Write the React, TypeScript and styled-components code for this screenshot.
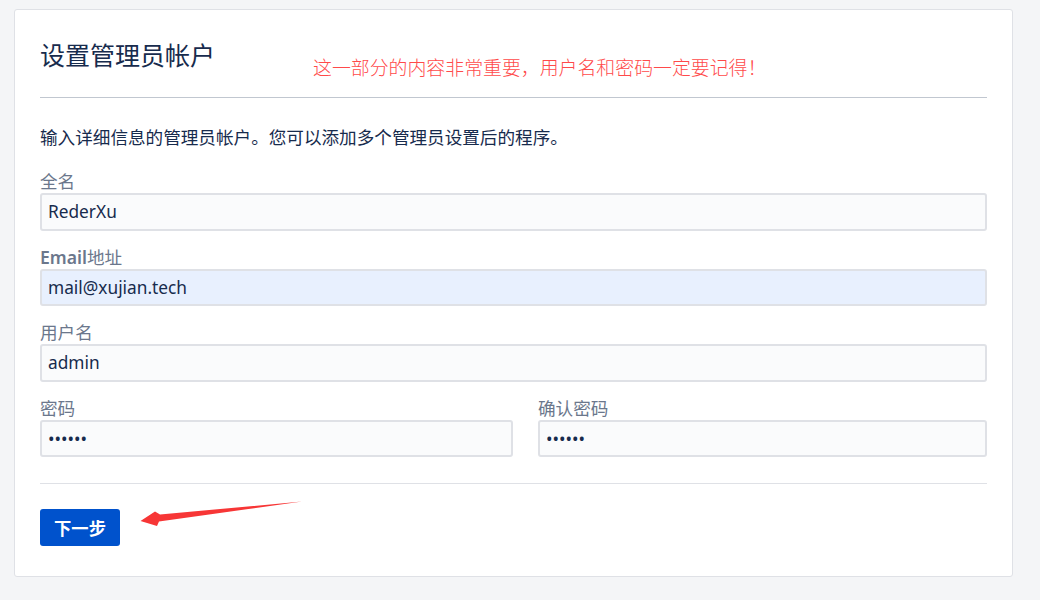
import React from 'react';
import styled, { createGlobalStyle } from 'styled-components';

const GlobalStyle = createGlobalStyle`
  html, body {
    margin: 0;
    padding: 0;
    background: #f4f5f7;
  }
  body {
    font-family: "Noto Sans", "Noto Sans CJK SC", sans-serif;
    color: #172b4d;
  }
  * {
    box-sizing: border-box;
  }
`;

const Page = styled.div`
  width: 1040px;
  height: 600px;
  padding: 9px 27px 0 14px;
  overflow: hidden;
`;

const Card = styled.div`
  position: relative;
  background: #fff;
  border: 1px solid #dfe1e6;
  border-radius: 3px;
  padding: 0 25px 30px;
`;

const Header = styled.div`
  position: relative;
  padding-top: 30px;
  padding-bottom: 27px;
  border-bottom: 1px solid #c1c7d0;
`;

const Title = styled.h2`
  margin: 0;
  font-size: 25px;
  line-height: 30px;
  font-weight: 400;
  color: #172b4d;
`;

const Note = styled.span`
  position: absolute;
  left: 273px;
  top: 46px;
  font-size: 18.9px;
  line-height: 24px;
  color: #ff4a4a;
  font-weight: 300;
  white-space: nowrap;
`;

const Intro = styled.p`
  margin: 27px 0 20px;
  font-size: 17.6px;
  line-height: 24px;
  color: #172b4d;
`;

const Field = styled.div`
  display: flex;
  flex-direction: column;
  margin-bottom: 14px;
`;

const Label = styled.label`
  font-size: 17.6px;
  line-height: 24px;
  color: #6b778c;
`;

const Strong = styled.span`
  font-weight: 600;
`;

const Input = styled.input<{ $filled?: boolean }>`
  height: 37.5px;
  width: 100%;
  border: 2px solid #dfe1e6;
  border-radius: 3px;
  background: ${(p) => (p.$filled ? '#e8f0fe' : '#fafbfc')};
  padding: 0 6px;
  font-family: inherit;
  font-size: 17.3px;
  color: #172b4d;
  outline: none;
`;

const Row = styled.div`
  display: grid;
  grid-template-columns: 473px 1fr;
  column-gap: 25px;
`;

const Footer = styled.div`
  position: relative;
  margin-top: 12px;
  padding-top: 25px;
  border-top: 1px solid #dfe1e6;
`;

const Button = styled.button`
  width: 80px;
  height: 37px;
  border: none;
  border-radius: 3px;
  background: #0052cc;
  color: #fff;
  font-family: inherit;
  font-size: 17.3px;
  font-weight: 700;
  cursor: pointer;
`;

const Arrow = styled.svg`
  position: absolute;
  left: 98px;
  top: 16px;
`;

export default function App() {
  return (
    <Page>
      <GlobalStyle />
      <Card>
        <Header>
          <Title>设置管理员帐户</Title>
          <Note>这一部分的内容非常重要，用户名和密码一定要记得！</Note>
        </Header>
        <Intro>输入详细信息的管理员帐户。您可以添加多个管理员设置后的程序。</Intro>
        <Field>
          <Label>全名</Label>
          <Input readOnly defaultValue="RederXu" />
        </Field>
        <Field>
          <Label>
            <Strong>Email</Strong>地址
          </Label>
          <Input readOnly $filled defaultValue="mail@xujian.tech" />
        </Field>
        <Field>
          <Label>用户名</Label>
          <Input readOnly defaultValue="admin" />
        </Field>
        <Row>
          <Field>
            <Label>密码</Label>
            <Input readOnly type="password" defaultValue="123456" />
          </Field>
          <Field>
            <Label>确认密码</Label>
            <Input readOnly type="password" defaultValue="123456" />
          </Field>
        </Row>
        <Footer>
          <Button>下一步</Button>
          <Arrow width="166" height="30" viewBox="0 0 166 30">
            <path
              d="M164 1.5 L22 14.5 L17 11.5 L2.5 21 L19 26 L21 21.5 Z"
              fill="#f73636"
            />
          </Arrow>
        </Footer>
      </Card>
    </Page>
  );
}
